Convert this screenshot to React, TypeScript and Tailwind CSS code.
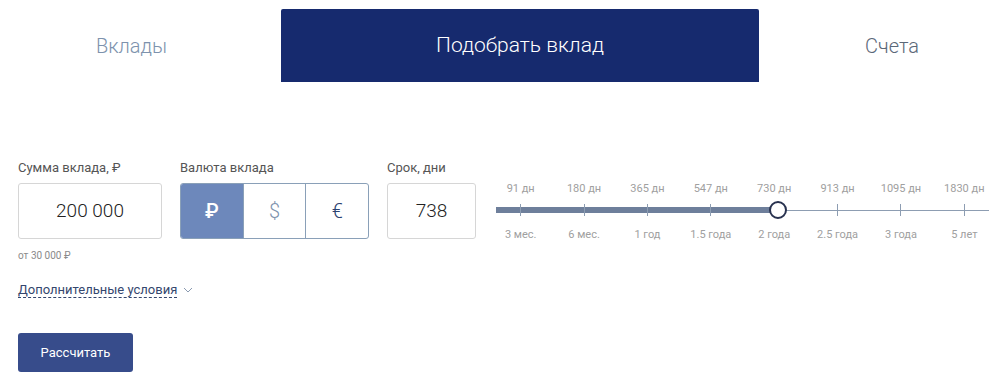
import { useState } from 'react';

const TABS = ['Вклады', 'Подобрать вклад', 'Счета'];

const TERMS = [
  { days: '91 дн', label: '3 мес.' },
  { days: '180 дн', label: '6 мес.' },
  { days: '365 дн', label: '1 год' },
  { days: '547 дн', label: '1.5 года' },
  { days: '730 дн', label: '2 года' },
  { days: '913 дн', label: '2.5 года' },
  { days: '1095 дн', label: '3 года' },
  { days: '1830 дн', label: '5 лет' },
];

const CURRENCIES = ['₽', '$', '€'];

export default function App() {
  const [tab, setTab] = useState(1);
  const [currency, setCurrency] = useState(0);

  return (
    <div className="w-[1007px] h-[389px] bg-white font-['Roboto',sans-serif] overflow-hidden">
      {/* Tabs */}
      <div className="flex pt-[9px] h-[82px]">
        {TABS.map((t, i) => (
          <button
            key={t}
            onClick={() => setTab(i)}
            className={
              i === 0
                ? 'w-[281px] pr-[18px] flex items-center justify-center text-[20px] font-light text-[#7d92ad]'
                : i === 1
                ? `w-[478px] flex items-center justify-center text-[21px] font-light rounded-t-[2px] ${tab === 1 ? 'bg-[#162a6e] text-white' : 'text-[#5b6878]'}`
                : 'flex-1 pl-[18px] flex items-center justify-center text-[20px] font-light text-[#5b6878]'
            }
          >
            {t}
          </button>
        ))}
      </div>

      <div className="pl-[18px] pt-[78px]">
        <div className="flex items-start">
          {/* Amount */}
          <div className="w-[144px] shrink-0">
            <div className="text-[13px] text-[#555] leading-[16px] h-[23px]">Сумма вклада, ₽</div>
            <div className="h-[56px] border border-[#d6d6d6] rounded-[3px] flex items-center justify-center text-[19px] font-light text-[#222]">
              200 000
            </div>
            <div className="mt-[9px] text-[10px] text-[#8a8a8a]">от 30 000 ₽</div>
          </div>

          {/* Currency */}
          <div className="ml-[18px] w-[189px] shrink-0">
            <div className="text-[13px] text-[#555] leading-[16px] h-[23px]">Валюта вклада</div>
            <div className="h-[56px] flex border border-[#8aa0b8] rounded-[3px] overflow-hidden">
              {CURRENCIES.map((c, i) => (
                <button
                  key={c}
                  onClick={() => setCurrency(i)}
                  className={`flex-1 flex items-center justify-center text-[20px] ${i > 0 ? 'border-l border-[#8aa0b8]' : ''} ${
                    currency === i
                      ? 'bg-[#6d88bb] text-white font-medium'
                      : i === 1
                      ? 'text-[#7d92ad] font-light'
                      : 'text-[#2c4270] font-light'
                  }`}
                >
                  {c}
                </button>
              ))}
            </div>
          </div>

          {/* Term */}
          <div className="ml-[18px] w-[89px] shrink-0">
            <div className="text-[13px] text-[#555] leading-[16px] h-[23px]">Срок, дни</div>
            <div className="h-[56px] border border-[#d6d6d6] rounded-[3px] flex items-center justify-center text-[19px] font-light text-[#222]">
              738
            </div>
          </div>

          {/* Slider */}
          <div className="ml-[13px] w-[507px] shrink-0 pt-[22px]">
            <div className="grid grid-cols-8 text-center text-[11px] text-[#a0a0a0] leading-[13px]">
              {TERMS.map((t) => (
                <span key={t.days}>{t.days}</span>
              ))}
            </div>
            <div className="relative h-[20px] mt-[5px] mx-[7px]">
              <div className="absolute left-0 right-0 top-[9.5px] h-px bg-[#8d9db2]" />
              <div className="absolute left-0 top-[7px] h-[6px] w-[282px] bg-[#6e7f9b]" />
              <div className="absolute -left-[7px] -right-[7px] top-[4px] grid grid-cols-8">
                {TERMS.map((t) => (
                  <div key={t.days} className="flex justify-center">
                    <div className="w-px h-[12px] bg-[#8d9db2]" />
                  </div>
                ))}
              </div>
              <div className="absolute left-[273px] top-[1px] w-[18px] h-[18px] rounded-full bg-white border-2 border-[#28324f]" />
            </div>
            <div className="grid grid-cols-8 text-center text-[11px] text-[#a0a0a0] leading-[13px] mt-[8px]">
              {TERMS.map((t) => (
                <span key={t.label}>{t.label}</span>
              ))}
            </div>
          </div>
        </div>

        {/* Additional conditions */}
        <div className="mt-[19px] flex items-center gap-[6px]">
          <span className="text-[13px] text-[#34466e] border-b border-dashed border-[#34466e] leading-[15px]">
            Дополнительные условия
          </span>
          <svg width="10" height="6" viewBox="0 0 10 6" fill="none">
            <path d="M1 1l4 4 4-4" stroke="#8a9ab0" strokeWidth="1" />
          </svg>
        </div>

        <button className="mt-[35px] w-[115px] h-[39px] rounded-[3px] bg-[#374c8b] text-white text-[13px]">
          Рассчитать
        </button>
      </div>
    </div>
  );
}
